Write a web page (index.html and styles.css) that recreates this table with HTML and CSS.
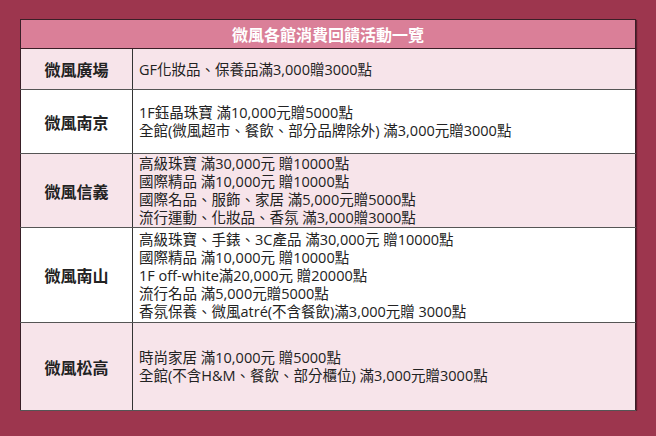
FILE: index.html
```html
<!DOCTYPE html>
<html lang="zh-Hant">
<head>
<meta charset="utf-8">
<title>微風各館消費回饋活動一覽</title>
<link rel="stylesheet" href="styles.css">
</head>
<body>
<table class="promo">
  <thead>
    <tr class="head"><th colspan="2">微風各館消費回饋活動一覽</th></tr>
  </thead>
  <tbody>
    <tr class="pink r1">
      <th>微風廣場</th>
      <td>GF化妝品、保養品滿3,000贈3000點</td>
    </tr>
    <tr class="white r2">
      <th>微風南京</th>
      <td>1F鈺晶珠寶 滿10,000元贈5000點<br>全館(微風超市、餐飲、部分品牌除外) 滿3,000元贈3000點</td>
    </tr>
    <tr class="pink r3">
      <th>微風信義</th>
      <td>高級珠寶 滿30,000元 贈10000點<br>國際精品 滿10,000元 贈10000點<br>國際名品、服飾、家居 滿5,000元贈5000點<br>流行運動、化妝品、香氛 滿3,000贈3000點</td>
    </tr>
    <tr class="white r4">
      <th>微風南山</th>
      <td>高級珠寶、手錶、3C產品 滿30,000元 贈10000點<br>國際精品 滿10,000元 贈10000點<br>1F off-white滿20,000元 贈20000點<br>流行名品 滿5,000元贈5000點<br>香氛保養、微風atré(不含餐飲)滿3,000元贈 3000點</td>
    </tr>
    <tr class="pink r5">
      <th>微風松高</th>
      <td>時尚家居 滿10,000元 贈5000點<br>全館(不含H&amp;M、餐飲、部分櫃位) 滿3,000元贈3000點</td>
    </tr>
  </tbody>
</table>
</body>
</html>
```

FILE: styles.css
```css
html, body {
  margin: 0;
  padding: 0;
}
body {
  background: #9d364e;
  padding: 19px 20px 0 20px;
  font-family: "Open Sans", "Noto Sans CJK TC", sans-serif;
  color: #222;
}
.promo {
  width: 616px;
  border-collapse: collapse;
  border: 1px solid #3a1f27;
  box-shadow: 1px 1px 1px rgba(40, 10, 20, 0.55);
}
.promo .head th {
  background: #da7f98;
  color: #fff;
  font-size: 16px;
  font-weight: 600;
  height: 28px;
  padding: 0;
  text-align: center;
  border-bottom: 1px solid #3a1f27;
}
.promo tbody th {
  width: 111px;
  font-size: 16px;
  font-weight: 700;
  color: #222;
  text-align: center;
  padding: 0;
  border-right: 1px solid #333;
  border-bottom: 1px solid #555;
}
.promo tbody td {
  font-size: 14.5px;
  line-height: 18px;
  padding: 1px 6px 0 6px;
  color: #222;
  border-bottom: 1px solid #555;
  vertical-align: middle;
}
.pink th, .pink td { background: #f7e4ea; }
.white th, .white td { background: #fff; }
.r1 { height: 41px; }
.r2 { height: 64px; }
.r3 { height: 74px; }
.r4 { height: 95px; }
.r5 { height: 88px; }
```
